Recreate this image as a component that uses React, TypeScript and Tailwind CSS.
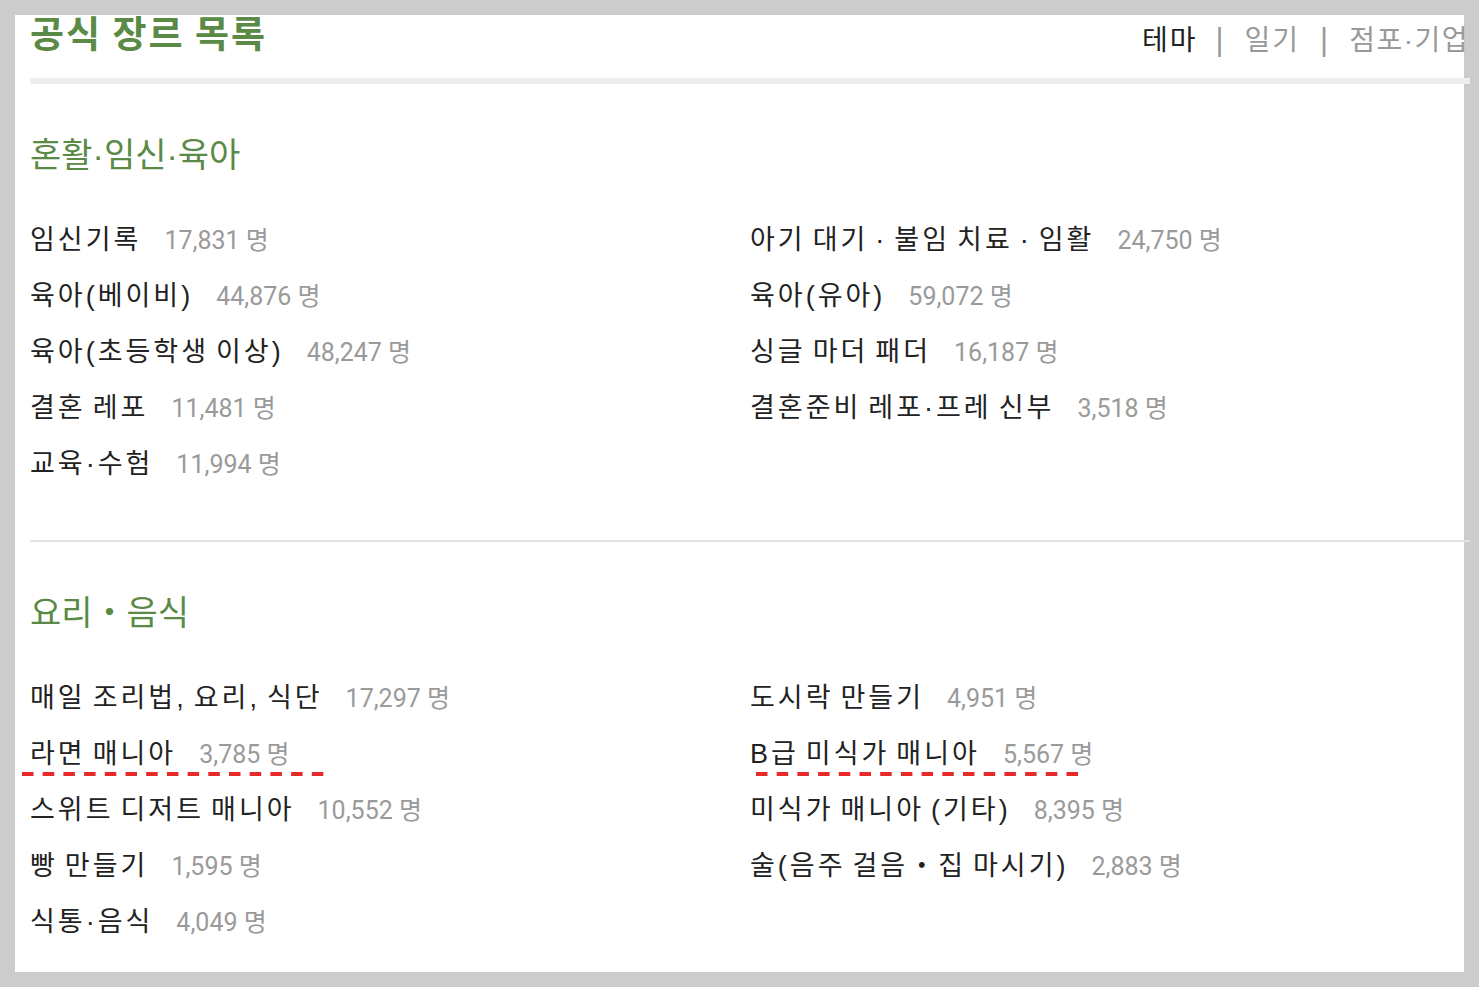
type Genre = { name: string; count: string; mark?: boolean }

const sections: { title: string; left: Genre[]; right: Genre[] }[] = [
  {
    title: '혼활·임신·육아',
    left: [
      { name: '임신기록', count: '17,831' },
      { name: '육아(베이비)', count: '44,876' },
      { name: '육아(초등학생 이상)', count: '48,247' },
      { name: '결혼 레포', count: '11,481' },
      { name: '교육·수험', count: '11,994' },
    ],
    right: [
      { name: '아기 대기 · 불임 치료 · 임활', count: '24,750' },
      { name: '육아(유아)', count: '59,072' },
      { name: '싱글 마더 패더', count: '16,187' },
      { name: '결혼준비 레포·프레 신부', count: '3,518' },
    ],
  },
  {
    title: '요리・음식',
    left: [
      { name: '매일 조리법, 요리, 식단', count: '17,297' },
      { name: '라면 매니아', count: '3,785', mark: true },
      { name: '스위트 디저트 매니아', count: '10,552' },
      { name: '빵 만들기', count: '1,595' },
      { name: '식통·음식', count: '4,049' },
    ],
    right: [
      { name: '도시락 만들기', count: '4,951' },
      { name: 'B급 미식가 매니아', count: '5,567', mark: true },
      { name: '미식가 매니아 (기타)', count: '8,395' },
      { name: '술(음주 걸음・집 마시기)', count: '2,883' },
    ],
  },
]

function Row({ g, side }: { g: Genre; side: 'left' | 'right' }) {
  return (
    <div className="relative h-[56px] flex items-center">
      <span className="text-[27px] leading-[27px] tracking-[3px] [word-spacing:-3.5px] text-[#222222] font-['Liberation_Sans','Noto_Sans_CJK_KR',sans-serif]">
        {g.name}
      </span>
      <span className="ml-[23px] text-[25px] leading-[25px] text-[#9a9a9a] font-['Roboto','Noto_Sans_CJK_KR',sans-serif]">
        {g.count} 명
      </span>
      {/* red dashed annotation */}
      {g.mark && (
        <svg
          className={`absolute top-[46px] h-[4px] ${side === 'left' ? 'left-[-8px] w-[304px]' : 'left-[6px] w-[325px]'}`}
          viewBox={side === 'left' ? '0 0 304 4' : '0 0 325 4'}
        >
          <line
            x1="0"
            y1="2"
            x2={side === 'left' ? 304 : 325}
            y2="2"
            stroke="#e62a2a"
            strokeWidth="4"
            strokeDasharray="11.5 9.2"
          />
        </svg>
      )}
    </div>
  )
}

export default function App() {
  return (
    <div className="w-[1479px] h-[987px] bg-[#cccccc] pt-[15px] pl-[15px] overflow-hidden">
      <div className="w-[1449px] h-[957px] bg-white pl-[15px]">
        <div className="w-[1440px]">
          {/* Header */}
          <div className="flex justify-between items-start h-[63px]">
            <h1 className="mt-[-1px] text-[37px] leading-[36px] tracking-[2px] font-bold text-[#5a8a46] font-['Noto_Sans_CJK_KR',sans-serif]">
              공식 장르 목록
            </h1>
            <div className="mt-[10px] mr-[1px] flex items-baseline text-[28px] leading-[30px] tracking-[2px] font-['Liberation_Sans','Noto_Sans_CJK_KR',sans-serif]">
              <span className="text-[#222222]">테마</span>
              <span className="ml-[18px] mr-[21px] text-[31px] text-[#999999] tracking-normal">|</span>
              <span className="text-[#999999]">일기</span>
              <span className="ml-[20px] mr-[21px] text-[31px] text-[#999999] tracking-normal">|</span>
              <span className="text-[#999999] tracking-[1.5px]">점포·기업</span>
            </div>
          </div>
          <div className="h-[6px] bg-[#eeeeee]" />

          {sections.map((s, i) => (
            <div key={s.title}>
              {i > 0 && <div className="h-[2px] bg-[#e3e3e3]" />}
              <div className={`pt-[54px] ${i === 0 ? 'pb-[48px]' : 'pb-[23px]'}`}>
                <h2 className="text-[34px] leading-[34px] text-[#5a8a46] font-['Liberation_Sans','Noto_Sans_CJK_KR',sans-serif]">
                  {s.title}
                </h2>
                <div className="mt-[40px] grid grid-cols-[720px_720px]">
                  <div className="flex flex-col">
                    {s.left.map((g) => (
                      <Row key={g.name} g={g} side="left" />
                    ))}
                  </div>
                  <div className="flex flex-col">
                    {s.right.map((g) => (
                      <Row key={g.name} g={g} side="right" />
                    ))}
                  </div>
                </div>
              </div>
            </div>
          ))}
        </div>
      </div>
    </div>
  )
}
